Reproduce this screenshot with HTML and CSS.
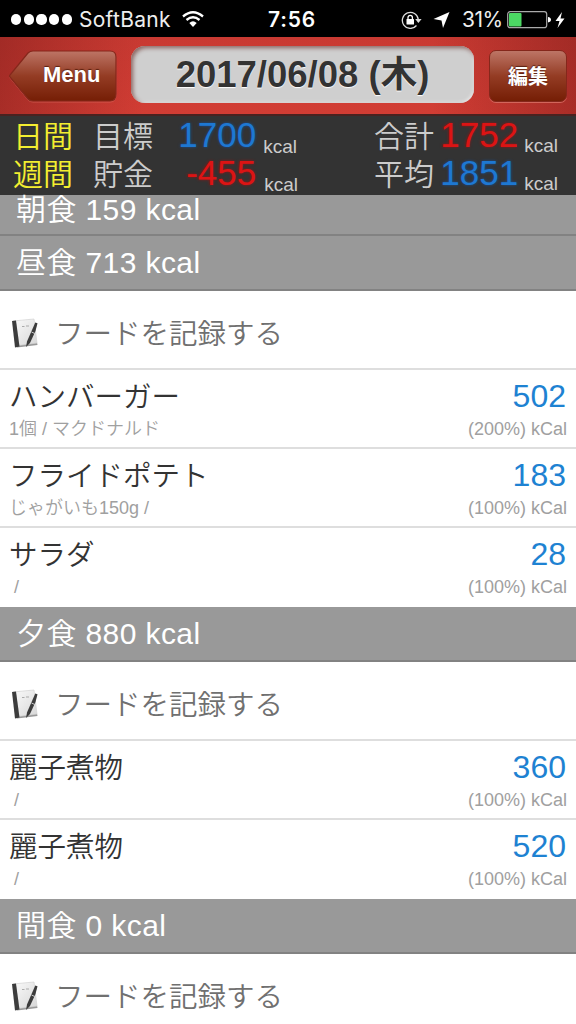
FILE: index.html
```html
<!DOCTYPE html>
<html lang="ja">
<head>
    <meta charset="UTF-8">
    <meta name="viewport" content="width=device-width, initial-scale=1.0">
    <title>カロリー記録</title>
    <link rel="stylesheet" href="styles.css">
</head>
<body>
    <svg width="0" height="0" class="defs">
        <defs>
            <linearGradient id="brown" x1="0" y1="0" x2="0" y2="1">
                <stop offset="0" stop-color="#bd7566"/>
                <stop offset="0.5" stop-color="#943c24"/>
                <stop offset="1" stop-color="#751e05"/>
            </linearGradient>
            <linearGradient id="paper" x1="0" y1="0" x2="1" y2="1">
                <stop offset="0" stop-color="#fafafa"/>
                <stop offset="1" stop-color="#d8d8d8"/>
            </linearGradient>
            <symbol id="note" viewBox="0 0 30 32">
                <path d="M5 28 L26 25.500 L26.500 28 L6 30.500z" fill="#999"/>
                <path d="M2 4 L23 2 L26 26 L7 28.500z" fill="url(#paper)" stroke="#d2d2d2" stroke-width="0.700"/>
                <path d="M1 4 L5 3.500 L8.500 29.500 L4 30.500z" fill="#3c3c3c"/>
                <path d="M11 9.500 h2.500 M15 9 h3" stroke="#aaa" stroke-width="1"/>
                <path d="M24.300 5.500 L26.500 6.300 L24.500 14 L19 26 L15 30 L16 24.500 L21 13z" fill="#3c3c3c"/>
                <path d="M20.500 15 L23.700 16.500" stroke="#ddd" stroke-width="0.900"/>
            </symbol>
        </defs>
    </svg>

    <div class="status">
        <div class="signal"><i></i><i></i><i></i><i></i><i></i></div>
        <span class="carrier">SoftBank</span>
        <svg class="wifi" width="22" height="17" viewBox="0 0 22 17">
            <path d="M1 5.500 Q11 -3 21 5.500 M4.500 9 Q11 3.500 17.500 9" fill="none" stroke="#fff" stroke-width="2.300"/>
            <path d="M7.300 12 Q11 8.500 14.700 12 L11 16z" fill="#fff"/>
        </svg>
        <span class="clock">7:56</span>
        <svg class="lock" width="21" height="18" viewBox="0 0 21 18">
            <path d="M15.500 14.500 A8 8 0 1 1 17.300 8.500" fill="none" stroke="#ddd" stroke-width="1.300"/>
            <path d="M14.200 8 h6.400 l-3.200 4z" fill="#ddd"/>
            <rect x="5.500" y="8" width="7.500" height="5.500" rx="0.500" fill="#fff"/>
            <path d="M7 8 V6.500 a2.200 2.200 0 0 1 4.400 0 V8" fill="none" stroke="#fff" stroke-width="1.300"/>
        </svg>
        <svg class="arrow" width="17" height="16" viewBox="0 0 17 16">
            <path d="M16.500 0 L10 16 L8.500 8.500 L0.500 7z" fill="#fff"/>
        </svg>
        <span class="percent">31%</span>
        <svg class="battery" width="45" height="18" viewBox="0 0 45 18">
            <rect x="0.700" y="0.700" width="39" height="16" rx="2.500" fill="none" stroke="#aaa" stroke-width="1.200"/>
            <rect x="2" y="2" width="12.500" height="13.500" rx="1" fill="#4cd964"/>
            <path d="M41 6 q3 0.500 3 2.700 q0 2.200 -3 2.700z" fill="#fff"/>
        </svg>
        <svg class="bolt" width="10" height="18" viewBox="0 0 10 18">
            <path d="M7 1 L0.500 10 H4.500 L2.500 17 L9.500 7.500 H5.500z" fill="#fff"/>
        </svg>
    </div>

    <div class="nav">
        <div class="menu">
            <svg width="108" height="53" viewBox="0 0 108 53">
                <path d="M24 2 H101 Q107 2 107 8 V45 Q107 52 101 52 H24 Q21 52 19 50 L1 28 Q0 26.500 1 25 L19 4 Q21 2 24 2z" fill="none" stroke="#dc6a5e" stroke-opacity="0.600"/>
                <path d="M24 1 H101 Q107 1 107 7 V44 Q107 51 101 51 H24 Q21 51 19 49 L1 27 Q0 26 1 25 L19 3 Q21 1 24 1z" fill="url(#brown)" stroke="#85271b" stroke-width="1.200"/>
            </svg>
            <span>Menu</span>
        </div>
        <div class="date">2017/06/08 (木)</div>
        <div class="edit">編集</div>
    </div>

    <div class="summary">
        <span class="yellow">日間</span>
        <span>目標</span>
        <span class="num"><b class="blue">1700</b><small>kcal</small></span>
        <span class="right">合計</span>
        <span class="num total"><b class="red">1752</b><small>kcal</small></span>
        <span class="yellow">週間</span>
        <span>貯金</span>
        <span class="num shift"><b class="red">-455</b><small>kcal</small></span>
        <span class="right">平均</span>
        <span class="num total"><b class="blue">1851</b><small>kcal</small></span>
    </div>

    <div class="section first">朝食 159 kcal</div>
    <div class="section">昼食 713 kcal</div>
    <div class="record"><svg width="30" height="32"><use href="#note"/></svg>フードを記録する</div>
    <div class="food">
        <span class="name">ハンバーガー</span><span class="kcal">502</span>
        <span class="detail">1個 / マクドナルド</span><span class="rate">(200%) kCal</span>
    </div>
    <div class="food">
        <span class="name">フライドポテト</span><span class="kcal">183</span>
        <span class="detail">じゃがいも150g /</span><span class="rate">(100%) kCal</span>
    </div>
    <div class="food last">
        <span class="name">サラダ</span><span class="kcal">28</span>
        <span class="detail empty">/</span><span class="rate">(100%) kCal</span>
    </div>

    <div class="section">夕食 880 kcal</div>
    <div class="record"><svg width="30" height="32"><use href="#note"/></svg>フードを記録する</div>
    <div class="food">
        <span class="name">麗子煮物</span><span class="kcal">360</span>
        <span class="detail empty">/</span><span class="rate">(100%) kCal</span>
    </div>
    <div class="food last">
        <span class="name">麗子煮物</span><span class="kcal">520</span>
        <span class="detail empty">/</span><span class="rate">(100%) kCal</span>
    </div>

    <div class="section">間食 0 kcal</div>
    <div class="record"><svg width="30" height="32"><use href="#note"/></svg>フードを記録する</div>
</body>
</html>
```

FILE: styles.css
```css
* {
    box-sizing: border-box;
}
body {
    margin: 0;
    width: 576px;
    height: 1024px;
    overflow: hidden;
    background-color: #fff;
    font-family: "Liberation Sans", "Noto Sans CJK JP", sans-serif;
    font-weight: 350;
    white-space: nowrap;
}
svg {
    display: block;
    flex: none;
}
.defs {
    position: absolute;
}

/* status bar */
.status {
    display: flex;
    align-items: center;
    height: 37px;
    padding: 2px 9px 0 11px;
    background-color: #000;
    color: #eee;
    font-family: Inter, "Liberation Sans", sans-serif;
    font-size: 21px;
    font-weight: 400;
}
.signal {
    display: flex;
    gap: 2.500px;
}
.signal i {
    width: 10.200px;
    height: 10.200px;
    border-radius: 50%;
    background-color: #fff;
}
.carrier {
    width: 92px;
    margin-left: 7px;
    letter-spacing: 0.300px;
}
.wifi {
    margin-left: 11px;
}
.clock {
    width: 50px;
    margin-left: 64px;
    font-weight: 600;
    letter-spacing: 0.800px;
    color: #fff;
}
.lock {
    margin-left: 83px;
}
.arrow {
    margin-left: 11px;
}
.percent {
    width: 40px;
    margin-left: 12px;
    letter-spacing: -0.500px;
}
.battery {
    margin-left: 5px;
}
.bolt {
    margin-left: 3px;
}

/* navigation bar */
.nav {
    display: flex;
    height: 79px;
    padding: 9px 9px 0;
    background: linear-gradient(90deg, rgba(90, 15, 15, 0.350), transparent 25%, transparent 75%, rgba(90, 15, 15, 0.350)), linear-gradient(#c93a32, #d23d34);
    border-bottom: 2px solid #4a2220;
}
.menu {
    position: relative;
    width: 108px;
    height: 53px;
    margin-top: 4px;
    color: #fff;
    font-size: 22px;
    font-weight: bold;
    line-height: 50px;
    text-shadow: 0 -1px 1px #5a2010;
}
.menu svg {
    position: absolute;
    left: 0;
    top: 0;
}
.menu span {
    position: relative;
    display: block;
    padding-left: 34px;
}
.date {
    width: 343px;
    height: 57px;
    margin-left: 14px;
    border-radius: 14px;
    background-color: #cfcfcf;
    box-shadow: inset 2px 2px 4px #8a6460, inset -1px -1px 3px #eee;
    color: #333;
    font-size: 36.500px;
    font-weight: bold;
    line-height: 57px;
    text-align: center;
    text-shadow: 0 1px 1px #fff;
}
.edit {
    width: 78px;
    height: 52px;
    margin: 4px 0 0 15px;
    border: 1px solid #85271b;
    border-radius: 7px;
    background: linear-gradient(#bd7566, #943c24 50%, #751e05);
    box-shadow: 0 1px 0 #d2665b;
    color: #fff;
    font-size: 20px;
    font-weight: bold;
    line-height: 52px;
    text-align: center;
    text-shadow: 0 -1px 1px #5a2010;
}

/* daily and weekly totals */
.summary {
    display: grid;
    grid-template-columns: 80px 60px 144px 137px 1fr;
    grid-template-rows: 38px 38px;
    align-items: baseline;
    height: 79px;
    padding: 2px 18px 0 13px;
    background-color: #333;
    color: #ccc;
    font-size: 30px;
    line-height: 38px;
}
.summary .right,
.summary .num {
    text-align: right;
}
.summary .shift {
    margin-right: -1px;
}
.summary .yellow {
    color: #f4ee30;
}
.summary b {
    font-size: 35px;
    font-weight: normal;
    line-height: 30px;
}
.summary small {
    margin-left: 7px;
    font-size: 19px;
    line-height: 19px;
    vertical-align: -6px;
}
.summary .total small {
    margin-left: 6px;
    vertical-align: -5px;
}
.summary .shift small {
    margin-left: 8px;
}
.blue {
    color: #1e78d2;
    text-shadow: 0 0 3px #1450a0;
}
.red {
    color: #dc1414;
    text-shadow: 0 0 3px #a01010;
}

/* meal list */
.section {
    height: 55px;
    padding-left: 16px;
    border-bottom: 2px solid #828282;
    background-color: #999;
    color: #fff;
    font-size: 30px;
    line-height: 54px;
    letter-spacing: 0.400px;
}
.section.first {
    height: 41px;
    line-height: 29px;
}
.record {
    display: flex;
    align-items: center;
    height: 79px;
    padding: 3px 0 0 11px;
    border-bottom: 2px solid #dedede;
    color: #707070;
    font-size: 28.500px;
}
.record svg {
    margin: 3px 14px 0 0;
}
.food {
    display: grid;
    grid-template-columns: 1fr auto;
    grid-template-rows: 49px 20px;
    height: 79px;
    padding: 0 9px;
    border-bottom: 2px solid #dedede;
}
.food.last {
    border-bottom: none;
}
.name {
    color: #333;
    font-size: 28.500px;
    line-height: 54px;
}
.kcal {
    padding-right: 1px;
    color: #1e82d2;
    font-size: 32px;
    line-height: 53px;
    text-align: right;
}
.detail,
.rate {
    color: #a0a0a0;
    font-size: 18px;
    line-height: 20px;
}
.detail.empty {
    padding-left: 5px;
}
```
